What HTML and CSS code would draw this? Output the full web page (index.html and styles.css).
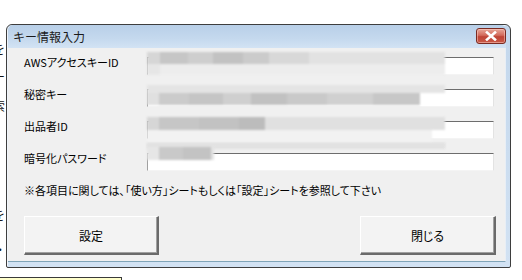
FILE: index.html
```html
<!DOCTYPE html>
<html lang="ja">
<head>
<meta charset="utf-8">
<title>キー情報入力</title>
<link rel="stylesheet" href="styles.css">
</head>
<body>
<div class="sheet">
  <span class="cell c1">を</span>
  <span class="cell c2">ー</span>
  <span class="cell c3">索</span>
  <span class="cell c4">を</span>
  <span class="cell c5">・</span>
  <div class="note-box"></div>
</div>

<div class="window">
  <div class="titlebar">
    <span class="title">キー情報入力</span>
    <div class="close">
      <svg width="14" height="10" viewBox="0 0 14 10"><path d="M3 1.5 L11 8.5 M11 1.5 L3 8.5" stroke="#fff" stroke-width="2.6" stroke-linecap="square"/></svg>
    </div>
  </div>
  <div class="client">
    <div class="form">
      <label class="lbl">AWSアクセスキーID</label>
      <div class="field">
        <div class="blur b1">
          <div class="r" style="height:12px"><i style="width:13px;background:#d6d6d6"></i><i style="width:28px;background:#c6c6c6"></i><i style="width:25px;background:#cecece"></i><i style="width:30px;background:#c2c2c2"></i><i style="width:26px;background:#cbcbcb"></i><i style="width:40px;background:#d8d8d8"></i><i style="width:136px;background:#e2e2e2"></i></div>
          <div class="r" style="height:11px"><i style="width:13px;background:#e6e6e6"></i><i style="width:285px;background:#ededed"></i></div>
        </div>
      </div>
      <label class="lbl">秘密キー</label>
      <div class="field">
        <div class="blur b2">
          <div class="r" style="height:8px"><i style="width:298px;background:#e4e4e4"></i></div>
          <div class="r" style="height:12px"><i style="width:12px;background:#e0e0e0"></i><i style="width:30px;background:#cbcbcb"></i><i style="width:34px;background:#c5c5c5"></i><i style="width:28px;background:#cfcfcf"></i><i style="width:36px;background:#c1c1c1"></i><i style="width:40px;background:#c9c9c9"></i><i style="width:46px;background:#d0d0d0"></i><i style="width:47px;background:#c7c7c7"></i></div>
        </div>
      </div>
      <label class="lbl">出品者ID</label>
      <div class="field">
        <div class="blur b3">
          <div class="r" style="height:13px"><i style="width:12px;background:#d6d6d6"></i><i style="width:40px;background:#c6c6c6"></i><i style="width:40px;background:#c2c2c2"></i><i style="width:26px;background:#bcbcbc"></i><i style="width:180px;background:#e0e0e0"></i></div>
          <div class="r" style="height:13px"><i style="width:285px;background:#f2f2f2"></i></div>
          <div class="r" style="height:6px"><i style="width:298px;background:#e2e2e2"></i></div>
        </div>
      </div>
      <label class="lbl">暗号化パスワード</label>
      <div class="field">
        <div class="blur b4">
          <div class="r" style="height:4px"><i style="width:298px;background:#e2e2e2"></i></div>
          <div class="r" style="height:13px"><i style="width:12px;background:#e6e6e6"></i><i style="width:24px;background:#c9c9c9"></i><i style="width:28px;background:#c3c3c3"></i><i style="width:3px;background:#e2e2e2"></i></div>
        </div>
      </div>
    </div>
    <p class="note">※各項目に関しては、「使い方」シートもしくは「設定」シートを参照して下さい</p>
    <div class="buttons">
      <button class="btn">設定</button>
      <button class="btn btn-close">閉じる</button>
    </div>
  </div>
</div>
</body>
</html>
```

FILE: styles.css
```css
* { box-sizing: border-box; }
html, body {
  margin: 0;
  padding: 0;
}
body {
  width: 522px;
  height: 280px;
  overflow: hidden;
  position: relative;
  background: #ffffff;
  font-family: "Noto Sans CJK JP", "Noto Sans", sans-serif;
  color: #000;
}

/* spreadsheet behind the dialog */
.sheet {
  position: absolute;
  inset: 0;
}
.cell {
  position: absolute;
  left: -7px;
  font-size: 12px;
  line-height: 12px;
  color: #111;
}
.c1 { top: 43px; }
.c2 { top: 71px; }
.c3 { top: 100px; }
.c4 { top: 209px; }
.c5 { top: 244px; left: -6px; }
.note-box {
  position: absolute;
  left: -1px;
  top: 277px;
  width: 123px;
  height: 10px;
  background: #ffffcc;
  border: 1px solid #3a3a3a;
}

/* dialog window */
.window {
  position: absolute;
  left: 6px;
  top: 24px;
  width: 505px;
  height: 244px;
  border: 1px solid #3e3e3e;
  border-radius: 6px 6px 2px 2px;
  background: linear-gradient(#c3d7ec, #d2e2f3);
  padding: 0 4px 5px 1px;
  display: flex;
  flex-direction: column;
  box-shadow: inset 1px 1px 0 rgba(255,255,255,0.7);
}
.titlebar {
  height: 23px;
  flex: none;
  position: relative;
  display: flex;
  align-items: center;
  padding-left: 5px;
  background: linear-gradient(#b8cfe8 0%, #c5d9ee 60%, #d3e3f4 100%);
  border-radius: 5px 5px 0 0;
}
.title {
  font-size: 12px;
  line-height: 14px;
  color: #1a1a1a;
  margin-top: 1px;
}
.close {
  position: absolute;
  right: 0;
  top: 3px;
  width: 30px;
  height: 16px;
  border: 1px solid #7a2b22;
  border-radius: 3px;
  background: linear-gradient(#e8a89a 0%, #d36b5c 45%, #bf4436 55%, #c95a48 100%);
  display: flex;
  align-items: center;
  justify-content: center;
  box-shadow: inset 0 0 0 1px rgba(255,210,200,0.5);
}
.close svg { display: block; }

.client {
  flex: 1;
  background: #f0f0f0;
  padding: 9px 0 0 16px;
  display: flex;
  flex-direction: column;
  border-right: 1px solid #e8eef5;
  border-bottom: 1px solid #7fa4b8;
}
.form {
  display: grid;
  grid-template-columns: 123px 347px;
  grid-auto-rows: 18px;
  row-gap: 14px;
}
.lbl {
  font-size: 11px;
  line-height: 14px;
  margin-top: -2px;
  font-feature-settings: "palt";
  white-space: nowrap;
}
.field {
  position: relative;
  background: #fff;
  border-top: 1px solid #6d6d6d;
  border-left: 1px solid #a0a0a0;
  border-right: 1px solid #e3e3e3;
  border-bottom: 1px solid #f4f4f4;
}
.blur {
  position: absolute;
  left: -1px;
  width: 298px;
  filter: blur(1.2px);
  display: flex;
  flex-direction: column;
}
.blur .r { display: flex; }
.blur i { display: block; height: 100%; }
.b1 { top: -6px; }
.b2 { top: -5px; }
.b3 { top: -5px; }
.b4 { top: -11px; }

.note {
  margin: 12px 0 0 0;
  font-size: 11px;
  line-height: 14px;
  font-feature-settings: "palt";
  white-space: nowrap;
}
.buttons {
  margin-top: 19px;
  display: flex;
  justify-content: space-between;
  width: 472px;
}
.btn {
  width: 135px;
  height: 39px;
  font-family: inherit;
  font-size: 12px;
  color: #000;
  background: #f3f3f3;
  border-top: 1px solid #ffffff;
  border-left: 1px solid #ffffff;
  border-right: 2px solid #6a6a6a;
  border-bottom: 2px solid #6a6a6a;
  box-shadow: inset -1px -1px 0 #a0a0a0;
  padding: 0;
  font-feature-settings: "palt";
}
.btn-close { width: 136px; }
```
